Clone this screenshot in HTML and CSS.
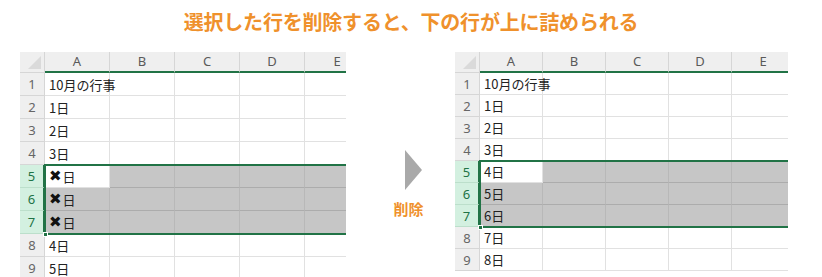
FILE: index.html
```html
<!DOCTYPE html>
<html lang="ja">
<head>
  <meta charset="UTF-8">
  <title>行の削除</title>
  <link rel="stylesheet" href="styles.css">
</head>
<body>

  <h1 class="title">選択した行を削除すると、下の行が上に詰められる</h1>

  <div class="stage">

    <!-- 削除前 -->
    <div class="sheet-wrap left">
      <div class="sheet">
        <div class="corner"></div>
        <div class="col-head">A</div>
        <div class="col-head">B</div>
        <div class="col-head">C</div>
        <div class="col-head">D</div>
        <div class="col-head">E</div>

        <div class="row-head">1</div><div class="cell">10月の行事</div><div class="cell"></div><div class="cell"></div><div class="cell"></div><div class="cell"></div>
        <div class="row-head">2</div><div class="cell">1日</div><div class="cell"></div><div class="cell"></div><div class="cell"></div><div class="cell"></div>
        <div class="row-head">3</div><div class="cell">2日</div><div class="cell"></div><div class="cell"></div><div class="cell"></div><div class="cell"></div>
        <div class="row-head">4</div><div class="cell">3日</div><div class="cell"></div><div class="cell"></div><div class="cell"></div><div class="cell"></div>
        <div class="row-head sel">5</div><div class="cell"><b class="x">✖</b>日</div><div class="cell gray"></div><div class="cell gray"></div><div class="cell gray"></div><div class="cell gray"></div>
        <div class="row-head sel">6</div><div class="cell gray"><b class="x">✖</b>日</div><div class="cell gray"></div><div class="cell gray"></div><div class="cell gray"></div><div class="cell gray"></div>
        <div class="row-head sel">7</div><div class="cell gray"><b class="x">✖</b>日</div><div class="cell gray"></div><div class="cell gray"></div><div class="cell gray"></div><div class="cell gray"></div>
        <div class="row-head">8</div><div class="cell">4日</div><div class="cell"></div><div class="cell"></div><div class="cell"></div><div class="cell"></div>
        <div class="row-head">9</div><div class="cell">5日</div><div class="cell"></div><div class="cell"></div><div class="cell"></div><div class="cell"></div>

        <div class="selection"><span class="handle"></span></div>
      </div>
    </div>

    <div class="arrow">
      <div class="tri"></div>
      <div class="label">削除</div>
    </div>

    <!-- 削除後 -->
    <div class="sheet-wrap right">
      <div class="sheet">
        <div class="corner"></div>
        <div class="col-head">A</div>
        <div class="col-head">B</div>
        <div class="col-head">C</div>
        <div class="col-head">D</div>
        <div class="col-head">E</div>

        <div class="row-head">1</div><div class="cell">10月の行事</div><div class="cell"></div><div class="cell"></div><div class="cell"></div><div class="cell"></div>
        <div class="row-head">2</div><div class="cell">1日</div><div class="cell"></div><div class="cell"></div><div class="cell"></div><div class="cell"></div>
        <div class="row-head">3</div><div class="cell">2日</div><div class="cell"></div><div class="cell"></div><div class="cell"></div><div class="cell"></div>
        <div class="row-head">4</div><div class="cell">3日</div><div class="cell"></div><div class="cell"></div><div class="cell"></div><div class="cell"></div>
        <div class="row-head sel">5</div><div class="cell">4日</div><div class="cell gray"></div><div class="cell gray"></div><div class="cell gray"></div><div class="cell gray"></div>
        <div class="row-head sel">6</div><div class="cell gray">5日</div><div class="cell gray"></div><div class="cell gray"></div><div class="cell gray"></div><div class="cell gray"></div>
        <div class="row-head sel">7</div><div class="cell gray">6日</div><div class="cell gray"></div><div class="cell gray"></div><div class="cell gray"></div><div class="cell gray"></div>
        <div class="row-head">8</div><div class="cell">7日</div><div class="cell"></div><div class="cell"></div><div class="cell"></div><div class="cell"></div>
        <div class="row-head">9</div><div class="cell">8日</div><div class="cell"></div><div class="cell"></div><div class="cell"></div><div class="cell"></div>

        <div class="selection"><span class="handle"></span></div>
      </div>
    </div>

  </div>

</body>
</html>
```

FILE: styles.css
```css
* { margin: 0; padding: 0; box-sizing: border-box; }
html, body {
  width: 100%;
  height: 100%;
  overflow: hidden;
  background: #fff;
  font-family: "Noto Sans CJK JP", "Noto Sans", sans-serif;
}
.title {
  height: 44px;
  padding-top: 8px;
  text-align: center;
  font-size: 20px;
  font-weight: bold;
  line-height: 28px;
  color: #ef912c;
  letter-spacing: -0.2px;
}
.stage {
  display: flex;
  align-items: flex-start;
  padding-top: 8px;
}
.sheet-wrap {
  overflow: hidden;
  height: 225px;
}
.sheet-wrap.left { width: 326px; margin-left: 20px; }
.sheet-wrap.right { width: 333px; }

.sheet {
  position: relative;
  display: grid;
  color: #222;
  font-size: 13px;
}
.left .sheet {
  grid-template-columns: 25px repeat(5, 65px);
  grid-template-rows: 21px repeat(9, 23px);
}
.right .sheet {
  grid-template-columns: 25px repeat(5, 63px);
  grid-template-rows: 21px repeat(9, 22px);
}

.corner {
  position: relative;
  background: #efefef;
  border-right: 1px solid #d6d6d6;
  border-bottom: 1px solid #d6d6d6;
}
.corner::after {
  content: "";
  position: absolute;
  right: 3px;
  bottom: 3px;
  border-style: solid;
  border-width: 0 0 13px 13px;
  border-color: transparent transparent #dadada transparent;
}
.col-head {
  background: #efefef;
  color: #5a5a5a;
  text-align: center;
  line-height: 19px;
  border-right: 1px solid #d6d6d6;
  border-bottom: 2px solid #217346;
  font-family: "Noto Sans", sans-serif;
}
.row-head {
  background: #efefef;
  color: #666;
  text-align: center;
  border-right: 1px solid #d6d6d6;
  border-bottom: 1px solid #d6d6d6;
  display: flex;
  align-items: center;
  justify-content: center;
  font-family: "Noto Sans", sans-serif;
}
.row-head.sel {
  background: #d3f0e0;
  color: #217346;
  border-right: 2px solid #217346;
  border-bottom-color: #bcdfcb;
}
.cell {
  border-right: 1px solid #e1e1e1;
  border-bottom: 1px solid #e1e1e1;
  padding-left: 4px;
  display: flex;
  align-items: center;
  white-space: nowrap;
  overflow: visible;
}
.cell.gray {
  background: #c6c6c6;
  border-right-color: #b8b8b8;
  border-bottom-color: #acacac;
}
.x {
  font-family: "DejaVu Sans", sans-serif;
  font-size: 15px;
  line-height: 1;
  color: #111;
  margin-right: 1px;
}

.selection {
  position: absolute;
  left: 24px;
  right: -4px;
  border: 2px solid #217346;
}
.left .selection { top: 112px; height: 71px; }
.right .selection { top: 108px; height: 68px; }
.handle {
  position: absolute;
  left: -3px;
  bottom: -4px;
  width: 5px;
  height: 5px;
  background: #217346;
  border: 1px solid #fff;
}

.arrow {
  width: 109px;
  padding-left: 16px;
  padding-top: 98px;
  display: flex;
  flex-direction: column;
  align-items: center;
}
.tri {
  width: 0;
  height: 0;
  border-style: solid;
  border-width: 20px 0 20px 17px;
  border-color: transparent transparent transparent #a9a9a9;
  margin-left: 9px;
}
.label {
  margin-top: 8px;
  font-size: 15px;
  font-weight: bold;
  color: #ef912c;
}
```
